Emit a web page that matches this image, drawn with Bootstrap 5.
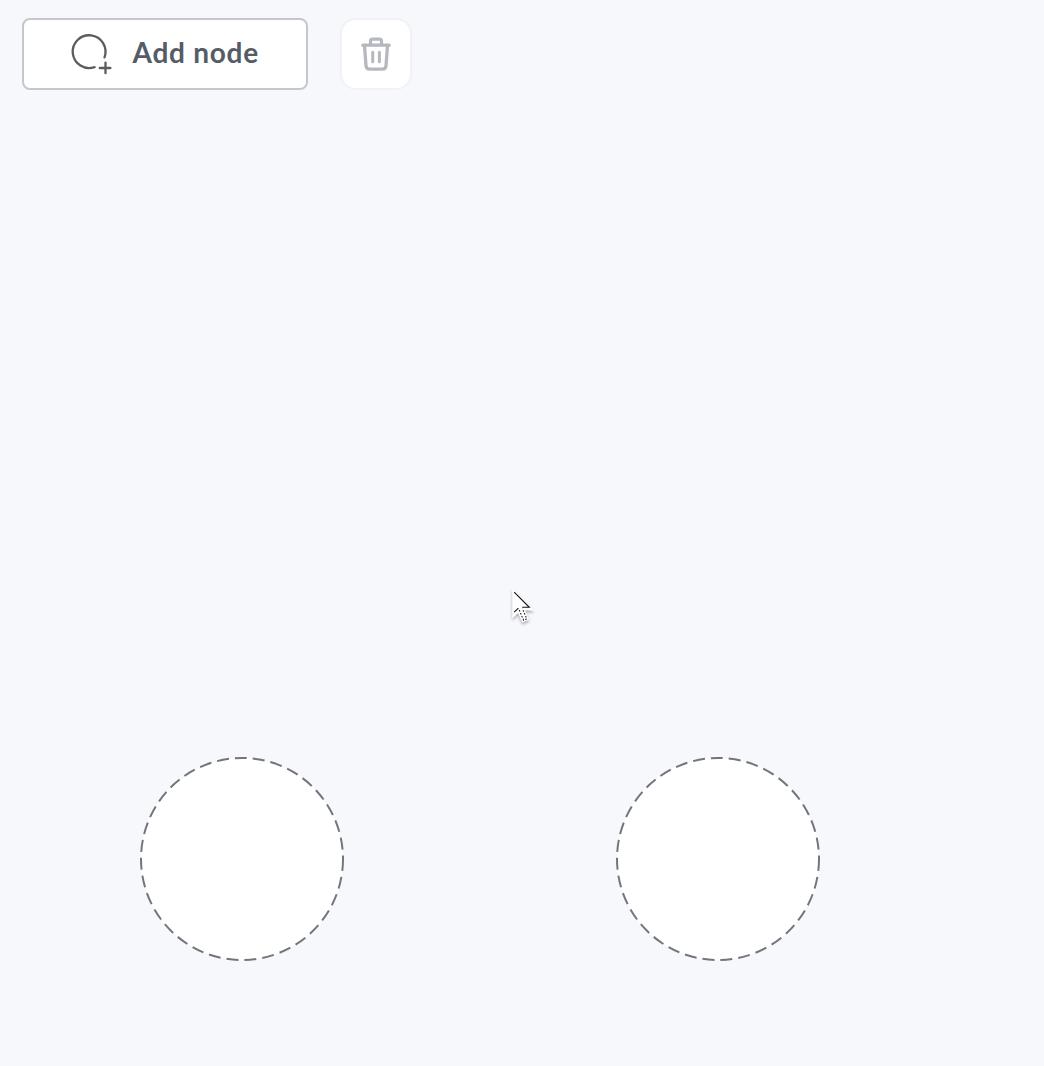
<!DOCTYPE html>
<html lang="en">
<head>
<meta charset="utf-8">
<meta name="viewport" content="width=device-width, initial-scale=1">
<title>Node editor</title>
<link href="https://cdn.jsdelivr.net/npm/bootstrap@5.3.0/dist/css/bootstrap.min.css" rel="stylesheet">
<style>
  body { background: #f7f8fc; font-family: Lato, "Open Sans", sans-serif; }
  .toolbar { padding: 18px 22px 0; gap: 32px; }
  .add-node {
    width: 286px; height: 72px; padding: 0 0 0 44px;
    border: 2px solid #c5c7ce; border-radius: 8px;
    --bs-btn-bg: #fff; --bs-btn-color: #565c66; --bs-btn-hover-bg: #fff;
    font-size: 28px; font-weight: 700; line-height: 1;
  }
  .add-label { margin-left: 16.5px; margin-top: -5px; letter-spacing: .75px; white-space: nowrap; }
  .trash-btn {
    width: 72px; height: 72px; padding: 0;
    border: 2px solid #f0f2f8; border-radius: 16px;
    --bs-btn-bg: #fff; --bs-btn-disabled-bg: #fff; --bs-btn-disabled-opacity: 1;
    --bs-btn-disabled-border-color: #f0f2f8;
  }
  .graph-node { width: 204px; height: 204px; top: 757px; }
  .node-a { left: 140px; }
  .node-b { left: 616px; }
  .pointer { left: 506px; top: 582px; filter: drop-shadow(0 2px 1.5px rgba(0,0,0,.3)); }
</style>
<script src="https://cdn.jsdelivr.net/npm/bootstrap@5.3.0/dist/js/bootstrap.bundle.min.js" defer></script>
</head>
<body>
<main class="position-relative vh-100 overflow-hidden">
  <div class="toolbar d-flex align-items-center">
    <button type="button" class="btn add-node d-flex align-items-center">
      <svg class="add-icon" width="48" height="48" viewBox="0 0 48 48" fill="none" stroke="#5c5c5c" stroke-width="2.3" stroke-linecap="round" aria-hidden="true">
        <path d="M26.6 37.1A16.4 16.4 0 1 1 36.5 27.3"/>
        <path d="M31.8 38h10.6M37.5 32.6V43.2"/>
      </svg>
      <span class="add-label">Add node</span>
    </button>
    <button type="button" class="btn trash-btn d-flex align-items-center justify-content-center" disabled aria-label="Delete">
      <svg width="36" height="40" viewBox="0 0 36 40" fill="none" stroke="#b6b8bf" stroke-width="3.3" stroke-linecap="round" stroke-linejoin="round" aria-hidden="true">
        <path d="M4.8 11.2h26.4"/>
        <path d="M12.5 10.8V7a1.8 1.8 0 0 1 1.8-1.8h7.4A1.8 1.8 0 0 1 23.5 7v3.8"/>
        <path d="M6.5 11.4 8 31.9a3.5 3.5 0 0 0 3.5 3.2h13a3.5 3.5 0 0 0 3.5-3.2L29.5 11.4"/>
        <path d="M14.7 18.2v9.6M21.4 18.2v9.6" stroke-width="3"/>
      </svg>
    </button>
  </div>

  <svg class="graph-node node-a position-absolute" viewBox="0 0 204 204" aria-hidden="true">
    <circle cx="102" cy="102" r="101" fill="#fff" stroke="#72757c" stroke-width="2" stroke-dasharray="12 6"/>
  </svg>
  <svg class="graph-node node-b position-absolute" viewBox="0 0 204 204" aria-hidden="true">
    <circle cx="102" cy="102" r="101" fill="#fff" stroke="#72757c" stroke-width="2" stroke-dasharray="12 6"/>
  </svg>

  <svg class="pointer position-absolute" width="34" height="46" viewBox="0 0 34 46" fill="none" aria-hidden="true">
    <path d="M6.3 6v30.5l5.8-5.5 4.2 9.5 6.8-2.8-4-9.2h8.8Z" fill="#fff"/>
    <path d="M8.2 10.2 23.3 25.3H16.2M8.2 30.2l4.2-4.1" stroke="#111" stroke-width="1.1"/>
    <path d="M13.2 28l4.4 10.2 3.2-1.3-4.5-10.3" stroke="#222" stroke-width="1.1" stroke-dasharray="1.7 1.5"/>
  </svg>
</main>
</body>
</html>
